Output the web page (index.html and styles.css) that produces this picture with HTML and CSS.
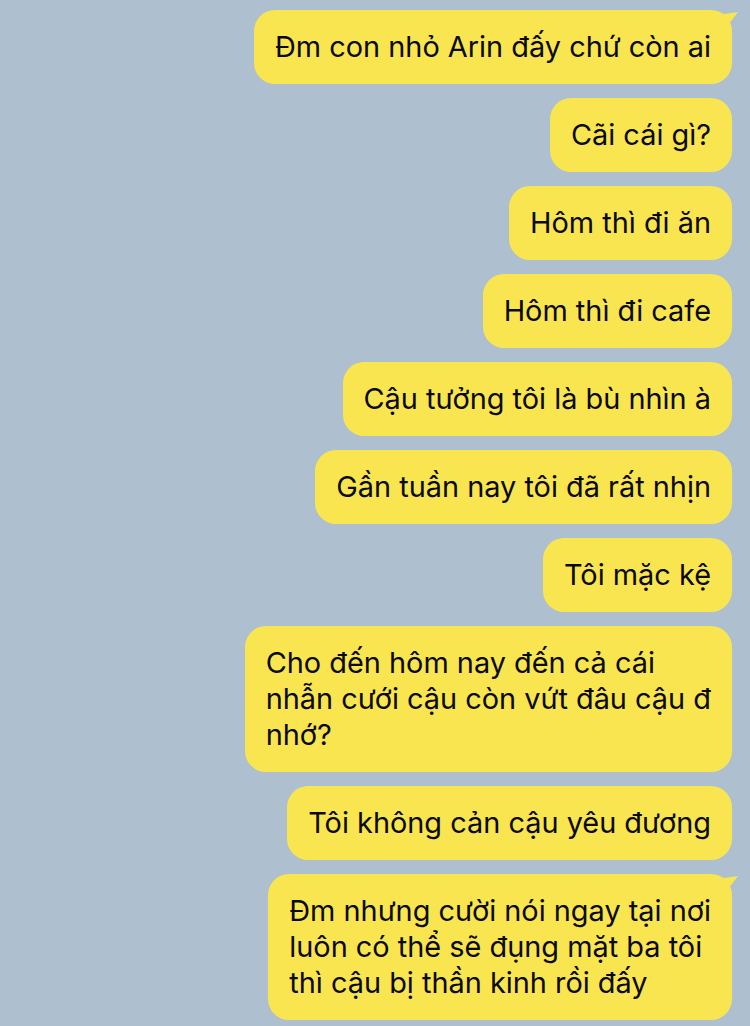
FILE: index.html
```html
<!DOCTYPE html>
<html lang="vi">

<head>
    <meta charset="UTF-8">
    <title>Chat</title>
    <link rel="stylesheet" href="styles.css">
</head>

<body>
    <div class="chat">
        <div class="bubble tail">Đm con nhỏ Arin đấy chứ còn ai</div>
        <div class="bubble">Cãi cái gì?</div>
        <div class="bubble">Hôm thì đi ăn</div>
        <div class="bubble">Hôm thì đi cafe</div>
        <div class="bubble">Cậu tưởng tôi là bù nhìn à</div>
        <div class="bubble">Gần tuần nay tôi đã rất nhịn</div>
        <div class="bubble">Tôi mặc kệ</div>
        <div class="bubble">Cho đến hôm nay đến cả cái<br>nhẫn cưới cậu còn vứt đâu cậu đ<br>nhớ?</div>
        <div class="bubble">Tôi không cản cậu yêu đương</div>
        <div class="bubble tail">Đm nhưng cười nói ngay tại nơi<br>luôn có thể sẽ đụng mặt ba tôi<br>thì cậu bị thần kinh rồi đấy</div>
    </div>
</body>

</html>
```

FILE: styles.css
```css
body {
    margin: 0;
    background: #aec0cf;
    font-family: Inter, 'Noto Sans', sans-serif;
    color: #0a0a0a;
}

.chat {
    display: flex;
    flex-direction: column;
    align-items: flex-end;
    gap: 14px;
    padding: 10px 18px 0 0;
}

.bubble {
    position: relative;
    background: #f9e54f;
    border-radius: 21px;
    padding: 19px 21px;
    font-size: 28.9px;
    line-height: 36px;
    white-space: nowrap;
}

/* small tail on the top right corner */
.tail::after {
    content: "";
    position: absolute;
    top: 2px;
    right: -6px;
    width: 22px;
    height: 16px;
    background: #f9e54f;
    clip-path: polygon(0 20%, 100% 0, 45% 100%);
}
```
